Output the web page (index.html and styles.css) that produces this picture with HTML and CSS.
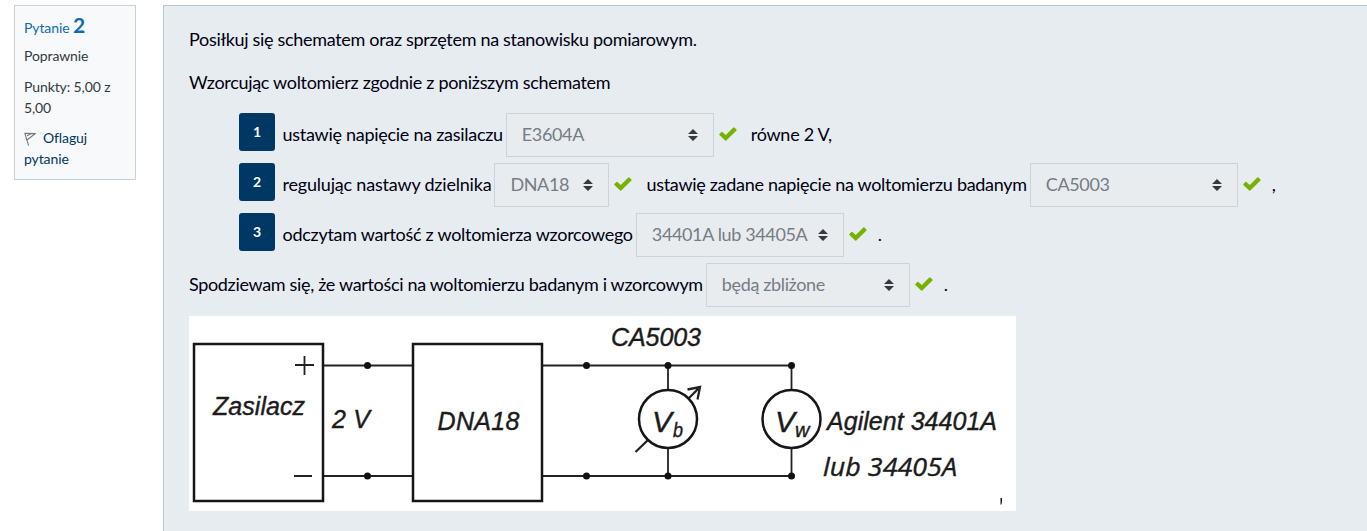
FILE: index.html
```html
<!DOCTYPE html>
<html lang="pl">
<head>
<meta charset="utf-8">
<title>Pytanie 2</title>
<link rel="stylesheet" href="styles.css">
</head>
<body>
<svg class="defs" width="0" height="0" aria-hidden="true">
  <symbol id="check" viewBox="0 0 18 14"><path fill="#76b300" d="M6.2 13.6 0.4 7.9Q0 7.4.4 6.9L2.4 4.9Q2.900 4.500 3.400 4.900L6.800 8.100 14.300.5Q14.800 .1 15.300.5L17.500 2.600Q17.900 3.100 17.500 3.600L7.300 13.600Q6.800 14 6.200 13.600Z"/></symbol>
  <symbol id="sort" viewBox="0 0 10 12"><path fill="#343a40" d="M0 5 5 0l5 5zM0 7h10l-5 5z"/></symbol>
</svg>
<main class="question">
  <aside class="info">
    <h3 class="no">Pytanie <span class="qno">2</span></h3>
    <div class="state">Poprawnie</div>
    <div class="grade">Punkty: 5,00 z 5,00</div>
    <a class="flag"><svg class="flag-icon" viewBox="0 0 12 14"><path fill="none" stroke="#777" stroke-width="1.1" d="M.7.9 4.6 13.6M1 1.200 11.200 1.600 3.300 7.800M3 3.800 7.500 1.500"/></svg>Oflaguj pytanie</a>
  </aside>
  <section class="formulation">
    <p class="text">Posiłkuj się schematem oraz sprzętem na stanowisku pomiarowym.</p>
    <p class="text lead">Wzorcując woltomierz zgodnie z poniższym schematem</p>
    <div class="row step"><span class="badge">1</span><span class="text">ustawię napięcie na zasilaczu</span><span class="select">E3604A<svg class="sort"><use href="#sort"/></svg></span><svg class="check"><use href="#check"/></svg><span class="text">równe 2 V,</span></div>
    <div class="row step loose"><span class="badge">2</span><span class="text">regulując nastawy dzielnika</span><span class="select short">DNA18<svg class="sort"><use href="#sort"/></svg></span><svg class="check"><use href="#check"/></svg><span class="text long">ustawię zadane napięcie na woltomierzu badanym</span><span class="select">CA5003<svg class="sort"><use href="#sort"/></svg></span><svg class="check"><use href="#check"/></svg><span class="text mark">,</span></div>
    <div class="row step"><span class="badge">3</span><span class="text">odczytam wartość z woltomierza wzorcowego</span><span class="select">34401A lub 34405A<svg class="sort"><use href="#sort"/></svg></span><svg class="check"><use href="#check"/></svg><span class="text mark">.</span></div>
    <div class="row tight"><span class="text">Spodziewam się, że wartości na woltomierzu badanym i wzorcowym</span><span class="select medium">będą zbliżone<svg class="sort"><use href="#sort"/></svg></span><svg class="check"><use href="#check"/></svg><span class="text mark">.</span></div>
    <svg class="schematic" viewBox="189 316 827 195">
      <g class="wire">
        <path d="M323 365.5H413M323 476H413M542 365.5H792M542 476H792M668 365V390M668 448V476M791.500 365V390M791.500 448V476"/>
        <path d="M295 365H314M304.500 356V375M294 476H312"/>
        <path class="arrow" d="M688 399 700 387M687.500 389.500 700 387 697.500 399.500M648 440 635.500 452"/>
      </g>
      <g class="body">
        <rect x="194" y="344" width="129" height="157"/>
        <rect x="413" y="344" width="129" height="157"/>
        <circle cx="668" cy="419" r="29"/>
        <circle cx="791.500" cy="419" r="29"/>
      </g>
      <g class="nodes">
        <circle cx="367.500" cy="365.500" r="3.500"/><circle cx="367.500" cy="476" r="3.500"/>
        <circle cx="586.500" cy="365.500" r="3.500"/><circle cx="586.500" cy="476" r="3.500"/>
        <circle cx="668" cy="365.500" r="3.500"/><circle cx="668" cy="476" r="3.500"/>
        <circle cx="791.500" cy="365.500" r="3.500"/><circle cx="791.500" cy="476" r="3.500"/>
        <path d="M1000.500 498h1.500v3l-.5 3.500h-1z"/>
      </g>
      <g class="label">
        <text x="213" y="414.500" textLength="92">Zasilacz</text>
        <text x="332" y="428" textLength="38">2 V</text>
        <text x="437.500" y="429.500" textLength="82">DNA18</text>
        <text x="611" y="346" textLength="90">CA5003</text>
        <text x="827" y="429.500" textLength="170">Agilent 34401A</text>
        <text x="823" y="475.500" textLength="134" lengthAdjust="spacingAndGlyphs" class="humanist">lub 34405A</text>
        <text x="652" y="432" class="big">V</text><text x="673" y="437" class="sub" textLength="10" lengthAdjust="spacingAndGlyphs">b</text>
        <text x="775" y="432" class="big">V</text><text x="795" y="437" class="sub">w</text>
      </g>
    </svg>
  </section>
</main>
</body>
</html>
```
FILE: styles.css
```css
* { box-sizing: border-box; }
body { margin: 0; background: #fff; font-family: Lato, sans-serif; color: #001; overflow: hidden; }
.defs { position: absolute; }
.question { display: flex; align-items: stretch; gap: 27px; padding: 5px 0 0 14px; height: 531px; }
.info { flex: none; width: 122px; height: 175px; padding: 7px 9px; border: 1px solid #cad0d7; background: #f8f9fa; font-size: 14px; line-height: 21px; letter-spacing: -0.1px; color: #343a40; }
.no { margin: 0; font-size: 14px; line-height: 25px; font-weight: 400; color: #0f6cad; }
.qno { font-size: 21px; font-weight: 700; line-height: 23px; }
.state { margin-top: 5px; }
.grade { margin-top: 10px; }
.flag { display: block; margin-top: 9px; color: #003762; }
.flag-icon { width: 12px; height: 14px; margin-right: 7px; vertical-align: -3px; }
.formulation { flex: 1; min-width: 0; padding: 20px 25px 0; border: 1px solid #b8c5d3; border-width: 1px 0 0 1px; background: #e7ecf0; }
.text { font-size: 18px; line-height: 27px; letter-spacing: -0.31px; white-space: nowrap; }
p.text { margin: 0; }
p.lead { margin-top: 16px; }
.row { display: flex; height: 44px; margin-top: 6px; align-items: center; }
.row .text { padding-bottom: 2px; }
.lead + .row { margin-top: 17px; }
.step { padding-left: 50px; }
.step .text { letter-spacing: -0.28px; }
.loose .text { letter-spacing: -0.2px; }
.loose .long { letter-spacing: -0.3px; }
.tight .text { letter-spacing: -0.33px; }
.badge { align-self: flex-start; width: 36px; height: 38px; margin-right: 7.5px; border-radius: 3px; background: #003865; color: #fff; font-size: 14px; font-weight: 700; line-height: 38px; text-align: center; }
.select { display: flex; align-items: center; justify-content: space-between; width: 208px; height: 44px; margin-left: 3px; padding: 0 15px 2px; border: 1px solid #cdd3d9; background: #e9ecef; color: #757c84; font-size: 18px; letter-spacing: -0.36px; white-space: nowrap; }
.short { width: 115px; }
.medium { width: 204px; }
.sort { width: 10px; height: 12px; margin-top: 2px; }
.check { width: 18px; height: 14px; margin: 0 14px 2px 5px; }
.row .mark { margin-left: -3px; }
.schematic { display: block; width: 827px; height: 195px; margin-top: 9px; background: #fff; }
.wire { fill: none; stroke: #222; stroke-width: 1.8; }
.arrow { stroke-width: 2.3; }
.body { fill: none; stroke: #161616; stroke-width: 2.5; }
.nodes { fill: #111; }
.label { font-family: "Liberation Sans", Arial, sans-serif; font-style: italic; font-size: 25px; fill: #1b1b1b; stroke: #1b1b1b; stroke-width: .4; }
.humanist { font-family: "Open Sans", sans-serif; font-size: 26px; }
.big { font-size: 30px; }
.sub { font-size: 20px; }
```
